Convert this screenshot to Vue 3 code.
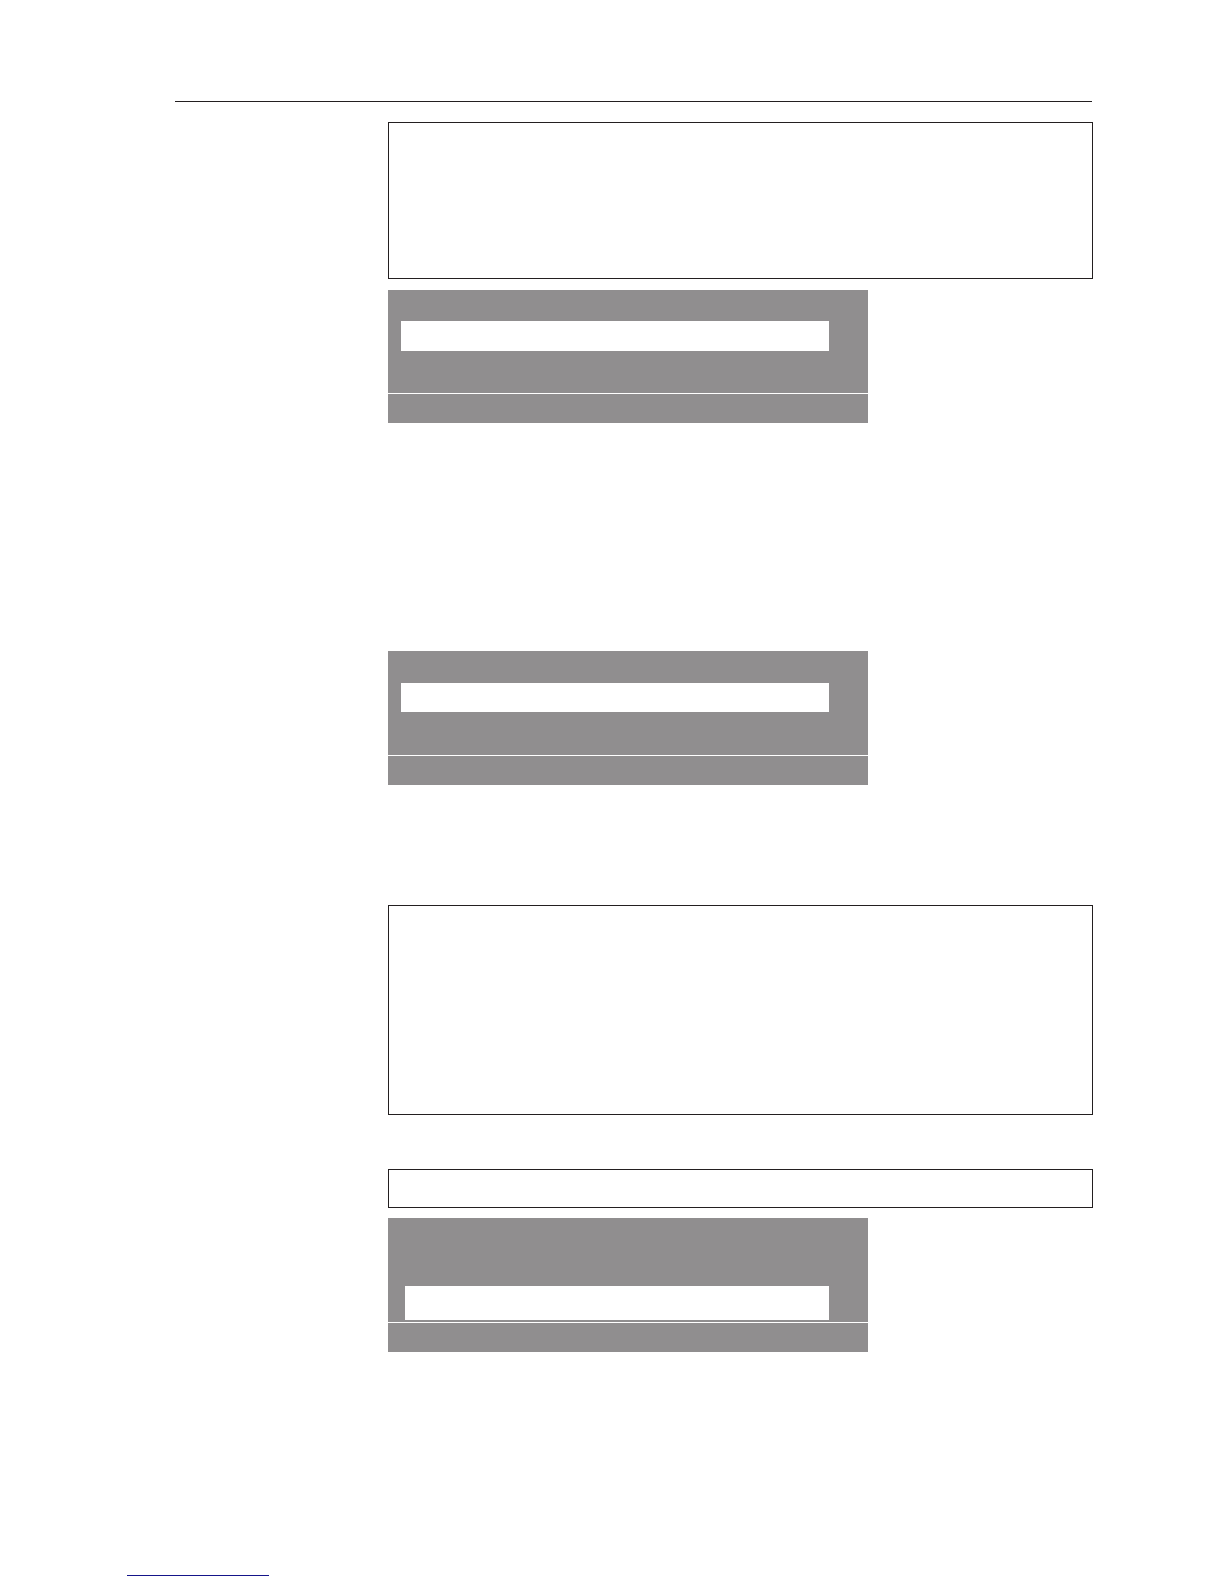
<template>
  <div class="page">
    <header class="page-header"></header>

    <main class="page-content">
      <section class="note-box note-medium"></section>
      <section class="display">
        <div class="display-body">
          <div class="display-field"></div>
        </div>
        <div class="display-footer"></div>
      </section>

      <section class="display display-spaced">
        <div class="display-body body-middle">
          <div class="display-field field-middle"></div>
        </div>
        <div class="display-footer"></div>
      </section>

      <section class="note-box note-large"></section>
      <section class="note-box note-small"></section>
      <section class="display display-close">
        <div class="display-body body-low">
          <div class="display-field field-low"></div>
        </div>
        <div class="display-footer"></div>
      </section>
    </main>

    <footer class="page-footer">
      <div class="footer-line"></div>
    </footer>
  </div>
</template>

<script setup>
</script>

<style>
body {
  margin: 0;
  background: #fff;
}
</style>

<style scoped>
.page {
  box-sizing: border-box;
  display: flex;
  flex-direction: column;
  min-height: 100vh;
  padding: 101px 131px 8px 127px;
  font-family: "Liberation Sans", Arial, sans-serif;
}

.page-header {
  margin: 0 1px 20px 48px;
  border-top: 1px solid #231f20;
}

.page-content {
  display: flex;
  flex-direction: column;
  margin-left: 261px;
}

/* Outlined boxes */
.note-box {
  box-sizing: border-box;
  border: 1px solid #231f20;
}

.note-medium {
  min-height: 157px;
}

.note-large {
  min-height: 210px;
  margin-top: 120px;
}

.note-small {
  min-height: 39px;
  margin-top: 54px;
}

/* Display panels */
.display {
  width: 100%;
  max-width: 480px;
  margin-top: 11px;
}

.display-spaced {
  margin-top: 228px;
}

.display-close {
  margin-top: 10px;
}

.display-body {
  padding: 31px 39px 42px 13px;
  background: #908e8f;
}

.body-middle {
  padding-top: 32px;
  padding-bottom: 43px;
}

.body-low {
  padding: 68px 39px 2px 17px;
}

.display-field {
  min-height: 30px;
  background: #fff;
}

.field-middle {
  min-height: 29px;
}

.field-low {
  min-height: 34px;
}

.display-footer {
  min-height: 29px;
  margin-top: 1px;
  background: #908e8f;
}

/* Footer */
.page-footer {
  margin-top: auto;
}

.footer-line {
  max-width: 142px;
  border-top: 1px solid #15158a;
}
</style>
